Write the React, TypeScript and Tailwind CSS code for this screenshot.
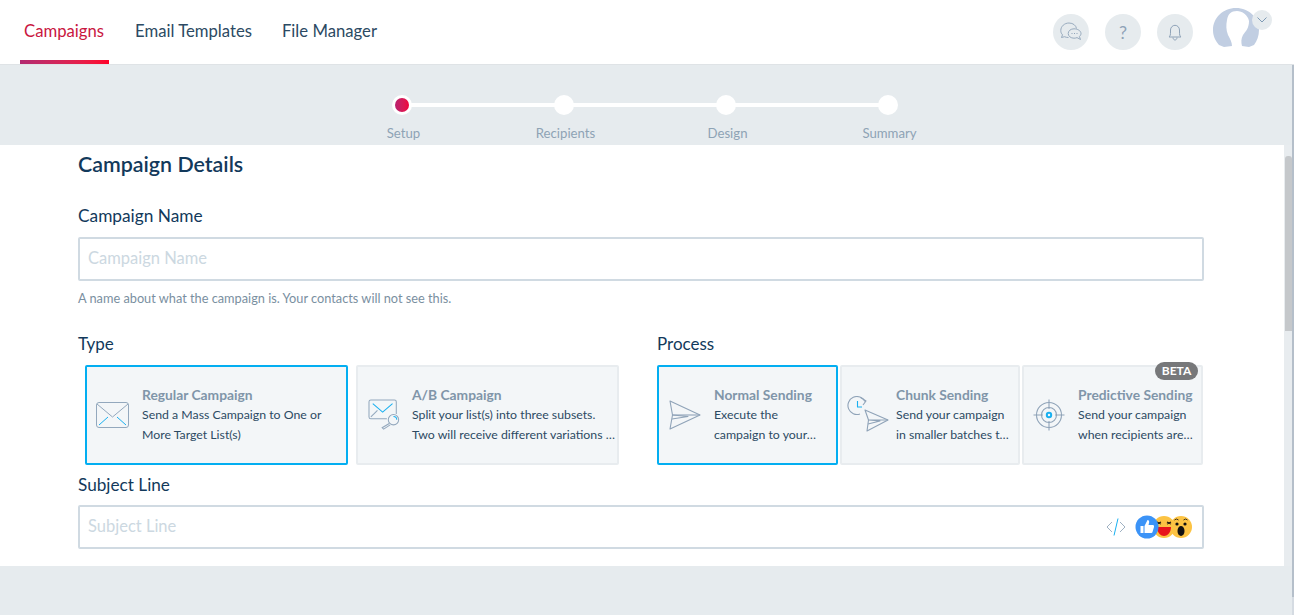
import React from "react";

const F = "font-['Lato','Noto_Sans',sans-serif]";

function Envelope() {
  return (
    <svg width="33" height="26" viewBox="0 0 33 26" fill="none" strokeWidth="1">
      <rect x="0.5" y="0.5" width="32" height="25" rx="2.5" stroke="#93a8bd" />
      <path d="M1 2 L16.5 15 L32 2" stroke="#93a8bd" />
      <path d="M3 23 L12 15" stroke="#19b0f0" />
      <path d="M30 23 L21 15" stroke="#19b0f0" />
    </svg>
  );
}
function AB() {
  return (
    <svg width="34" height="32" viewBox="0 0 36 34" fill="none" strokeWidth="1.1">
      <path d="M20 21 H3 a2 2 0 0 1 -2 -2 V3 a2 2 0 0 1 2 -2 H28 a2 2 0 0 1 2 2 V16" stroke="#93a8bd" />
      <path d="M5 5 L15.5 14 L26 5" stroke="#19b0f0" />
      <path d="M3 19 L10 12" stroke="#93a8bd" />
      <circle cx="27" cy="22" r="5.5" stroke="#93a8bd" />
      <path d="M27 18.5 a3.5 3.5 0 0 1 3.5 3.5" stroke="#19b0f0" />
      <path d="M22.5 26 L15 30.5 L16.5 32 L23.5 27.5" stroke="#93a8bd" />
    </svg>
  );
}
function Plane({ w = 32, h = 30 }: { w?: number; h?: number }) {
  return (
    <svg width={w} height={h} viewBox="0 0 32 30" fill="none" stroke="#8fa3b8" strokeWidth="1.1" strokeLinejoin="round">
      <path d="M1 1 L31 15 L1 29 L3.5 15 Z" />
      <path d="M3.5 15 H31" />
      <path d="M3.5 15 L19 16.5 L3 19" />
    </svg>
  );
}
function Chunk() {
  return (
    <svg width="42" height="38" viewBox="0 0 42 38" fill="none" strokeWidth="1.1" strokeLinejoin="round">
      <path d="M18 5.5 A9 9 0 1 0 13 18" stroke="#8fa3b8" />
      <path d="M13.5 1.5 L19 5 L16 9" stroke="#8fa3b8" />
      <path d="M10.5 5 V11 H15" stroke="#19b0f0" />
      <path d="M18 14 L41 24 L20 35 L21.5 24 Z" stroke="#8fa3b8" />
      <path d="M21.5 24 H41 M21.5 24 L33 25 L21 28" stroke="#8fa3b8" />
    </svg>
  );
}
function Target() {
  return (
    <svg width="32" height="32" viewBox="0 0 32 32" fill="none" stroke="#8fa3b8" strokeWidth="1.1">
      <circle cx="16" cy="16" r="12.5" />
      <circle cx="16" cy="16" r="7.5" />
      <path d="M16 0.5 V10 M16 22 V31.5 M0.5 16 H10 M22 16 H31.5" />
      <circle cx="16" cy="16" r="2.2" stroke="#19b0f0" strokeWidth="2" />
    </svg>
  );
}
function ChatIcon() {
  return (
    <svg width="22" height="20" viewBox="0 0 22 20" fill="none" stroke="#8fa3b8" strokeWidth="0.9" strokeLinejoin="round">
      <path d="M8.5 15.5 C7 15.5 5.5 15.2 4.5 14.7 L1.5 15.5 L2.5 12.8 C1.2 11.5 0.8 10 0.8 8.5 C0.8 4.3 4.5 1 9 1 C13.2 1 16 3.5 16.5 6.5" />
      <path d="M14 6.8 C10.8 6.8 8.2 8.8 8.2 11.5 C8.2 14.2 10.8 16.2 14 16.2 C15 16.2 16.2 16 17 15.6 L20.5 17.5 L19.4 14.5 C20.5 13.5 21 12.6 21 11.5 C21 8.8 17.5 6.8 14 6.8 Z" />
      <path d="M11.5 11.5 H12.5 M14 11.5 H15 M16.5 11.5 H17.5" strokeWidth="1.2" />
    </svg>
  );
}
function BellIcon() {
  return (
    <svg width="14" height="17" viewBox="0 0 14 17" fill="none" stroke="#8fa3b8" strokeWidth="1" strokeLinejoin="round">
      <path d="M1 13 C2.3 12 2.5 10.5 2.5 8 V6 C2.5 3.5 4.5 1.3 7 1.3 C9.5 1.3 11.5 3.5 11.5 6 V8 C11.5 10.5 11.7 12 13 13 Z" />
      <path d="M5 13.5 C5 15 6 16 7 16 C8 16 9 15 9 13.5" />
    </svg>
  );
}
function Avatar() {
  return (
    <svg width="46" height="40" viewBox="0 0 46 40">
      <path
        fill="#c1cee2"
        d="M6 37 C2 32 0 28 0 22 C0 10 10 0 23 0 C36 0 46 10 46 22 C46 28 44 33 41 37 L36 39 L29 38 C28 34 28 31 30 27 C33 23 36 20 36 13 C35 7 29 3 24 3 C18 3 15 6 14 12 C13 17 13 22 15 27 C17 31 19 34 19 38 L11 39 Z"
      />
    </svg>
  );
}
function LikeEmoji() {
  return (
    <svg width="58" height="24" viewBox="0 0 58 24">
      <circle cx="46" cy="12" r="11" fill="#fcc343" />
      <ellipse cx="46" cy="16" rx="3.5" ry="5" fill="#111" />
      <circle cx="42" cy="9" r="1.6" fill="#111" />
      <circle cx="50" cy="9" r="1.6" fill="#111" />
      <path d="M39.5 5 q2 -2 4 0 M48.5 5 q2 -2 4 0" stroke="#111" strokeWidth="0.8" fill="none" />
      <circle cx="29" cy="12" r="11" fill="#fcc343" />
      <path d="M22 12 H36 C36 18 32 21 29 21 C26 21 22 18 22 12 Z" fill="#e8141c" />
      <path d="M22 9 L26 7 M26 9 L22 7 M32 9 L36 7 M32 7 L36 9" stroke="#111" strokeWidth="1.1" />
      <circle cx="12" cy="12" r="11.5" fill="#3b93f7" />
      <path fill="#fff" d="M5.5 11 H8.5 V18 H5.5 Z M9.5 11 L12.5 5 C14 5 14.5 6.5 14 8 L13.5 10 H18 C19 10 19.2 11 19 12 L17.5 17 C17.3 17.8 16.8 18 16 18 H9.5 Z" />
    </svg>
  );
}

function Card({ icon, title, l1, l2, active, width, iconW, iconPad }: { icon: React.ReactNode; title: string; l1: string; l2: string; active?: boolean; width: string; iconW: string; iconPad?: string }) {
  return (
    <div className={`${width} h-[100px] rounded-[2px] border-2 ${active ? "border-[#03aef1]" : "border-[#e8ecef]"} bg-[#f3f6f8] flex items-start`}>
      <div className={`${iconW} ${iconPad ?? ""} shrink-0 h-full flex items-center justify-center`}>{icon}</div>
      <div className="min-w-0 flex-1 pt-[17px] pr-[6px]">
        <div className="text-[13.8px] leading-[21px] font-bold text-[#8095a9] whitespace-nowrap">{title}</div>
        <div className="text-[12.3px] leading-[20px] text-[#2c4a63] whitespace-nowrap">{l1}</div>
        <div className="text-[12.3px] leading-[20px] text-[#2c4a63] whitespace-nowrap">{l2}</div>
      </div>
    </div>
  );
}

function Step({ label, active }: { label: string; active?: boolean }) {
  return (
    <div className="w-[20px] flex flex-col items-center relative">
      {active ? (
        <div className="w-[20px] h-[20px] rounded-full bg-white flex items-center justify-center">
          <div className="w-[14px] h-[14px] rounded-full bg-gradient-to-r from-[#b8206f] to-[#f0003c]" />
        </div>
      ) : (
        <div className="w-[20px] h-[20px] rounded-full bg-white" />
      )}
      <div className="mt-[9px] ml-[3px] text-[13.2px] leading-[18px] text-[#8ea3b5] whitespace-nowrap">{label}</div>
    </div>
  );
}

function Round({ children }: { children: React.ReactNode }) {
  return <div className="w-[36px] h-[36px] rounded-full bg-[#e6ebee] flex items-center justify-center">{children}</div>;
}

export default function App() {
  return (
    <div className={`${F} relative w-[1294px] h-[615px] overflow-hidden bg-[#e6ebee] flex flex-col text-[#12395b]`}>
      <header className="h-[65px] shrink-0 bg-white flex items-start border-b border-[#dfe3e6]">
        <nav className="flex pl-[20px] text-[16.7px]">
          <div className="relative h-[64px] w-[89px] pl-[4px] pt-[20px] leading-[22px] text-[#c9173f] whitespace-nowrap">
            Campaigns
            <div className="absolute left-0 right-0 bottom-0 h-[4px] bg-gradient-to-r from-[#b32a70] to-[#ff0029]" />
          </div>
          <div className="ml-[26px] pt-[20px] leading-[22px] text-[#2c4a63]">Email Templates</div>
          <div className="ml-[30px] pt-[20px] leading-[22px] text-[#2c4a63]">File Manager</div>
        </nav>
        <div className="ml-auto flex items-start pr-[35px]">
          <div className="flex gap-[16px] mt-[14px]">
            <Round><ChatIcon /></Round>
            <Round><span className="text-[18px] text-[#8fa3b8]">?</span></Round>
            <Round><BellIcon /></Round>
          </div>
          <div className="relative ml-[20px] mt-[8px] w-[46px] h-[40px]">
            <Avatar />
            <div className="absolute top-[2px] -right-[13px] w-[20px] h-[20px] rounded-full bg-[#e6ebee] flex items-center justify-center">
              <svg width="10" height="6" viewBox="0 0 10 6" fill="none" stroke="#7f9bb5" strokeWidth="1"><path d="M0.5 0.5 L5 5 L9.5 0.5" /></svg>
            </div>
          </div>
        </div>
      </header>

      <div className="h-[80px] shrink-0 pt-[30px] flex justify-center">
        <div className="relative flex justify-between w-[506px] h-[50px] -translate-x-[2px]">
          <div className="absolute left-[10px] right-[10px] top-[8px] h-[4px] bg-white" />
          <Step label="Setup" active />
          <Step label="Recipients" />
          <Step label="Design" />
          <Step label="Summary" />
        </div>
      </div>

      <div className="flex h-[421px] shrink-0">
        <main className="w-[1284px] bg-white pl-[78px] pr-[80px]">
          <h1 className="text-[21.4px] leading-[24px] mt-[7px] font-semibold text-[#12395b]">Campaign Details</h1>
          <div className="mt-[30px] text-[17.3px] leading-[20px]">Campaign Name</div>
          <div className="mt-[11px] h-[44px] border-2 border-[#d0dae2] rounded-[2px] flex items-center pl-[8px] pb-[2px] text-[16.5px] text-[#ccd8e1]">Campaign Name</div>
          <div className="mt-[8px] text-[12.75px] leading-[18px] text-[#7a8f9f]">A name about what the campaign is. Your contacts will not see this.</div>
          <div className="mt-[27px] flex">
            <div className="w-[579px]">
              <div className="text-[17px] leading-[20px]">Type</div>
              <div className="flex mt-[11px] pl-[7px] gap-[8px]">
                <Card active width="w-[263px]" iconW="w-[55px]" iconPad="pr-[4px]" icon={<Envelope />} title="Regular Campaign" l1="Send a Mass Campaign to One or" l2="More Target List(s)" />
                <Card width="w-[263px]" iconW="w-[54px]" icon={<AB />} title="A/B Campaign" l1="Split your list(s) into three subsets." l2="Two will receive different variations …" />
              </div>
            </div>
            <div className="flex-1">
              <div className="text-[17px] leading-[20px]">Process</div>
              <div className="flex mt-[11px] gap-[2px] relative">
                <Card active width="w-[181px]" iconW="w-[55px]" iconPad="pr-[4px]" icon={<Plane />} title="Normal Sending" l1="Execute the" l2="campaign to your…" />
                <Card width="w-[180px]" iconW="w-[54px]" iconPad="pr-[2px]" icon={<Chunk />} title="Chunk Sending" l1="Send your campaign" l2="in smaller batches t…" />
                <Card width="w-[181px]" iconW="w-[54px]" iconPad="pr-[4px]" icon={<Target />} title="Predictive Sending" l1="Send your campaign" l2="when recipients are…" />
                <div className="absolute right-[6px] -top-[3px] h-[18px] w-[43px] rounded-full bg-[#77787a] text-white text-[12px] font-bold flex items-center justify-center">BETA</div>
              </div>
            </div>
          </div>
          <div className="mt-[10px] text-[17.2px] leading-[20px]">Subject Line</div>
          <div className="mt-[10px] h-[44px] border-2 border-[#d0dae2] rounded-[2px] flex items-center pl-[8px] pr-[9px] text-[16.5px] text-[#ccd8e1]">
            <span className="pb-[2px]">Subject Line</span>
            <svg className="ml-auto mr-[9px]" width="20" height="18" viewBox="0 0 20 18" fill="none" strokeWidth="1"><path d="M6 4 L1 9 L6 14 M14 4 L19 9 L14 14" stroke="#9fb1c2" /><path d="M12 0.5 L8 17.5" stroke="#19b0f0" /></svg>
            <LikeEmoji />
          </div>
        </main>
        <div className="w-[10px] bg-[#e8ecef] relative">
          <div className="absolute left-[1px] right-[2px] top-[11px] h-[175px] bg-[#c5c8cb] rounded-t-[3px]" />
        </div>
      </div>
      <div className="absolute right-0 top-[65px] w-[2px] h-[532px] bg-[#b5bfca]" />
      <div className="absolute right-0 top-[597px] w-[2px] h-[18px] bg-[#d5dbe2]" />
    </div>
  );
}
